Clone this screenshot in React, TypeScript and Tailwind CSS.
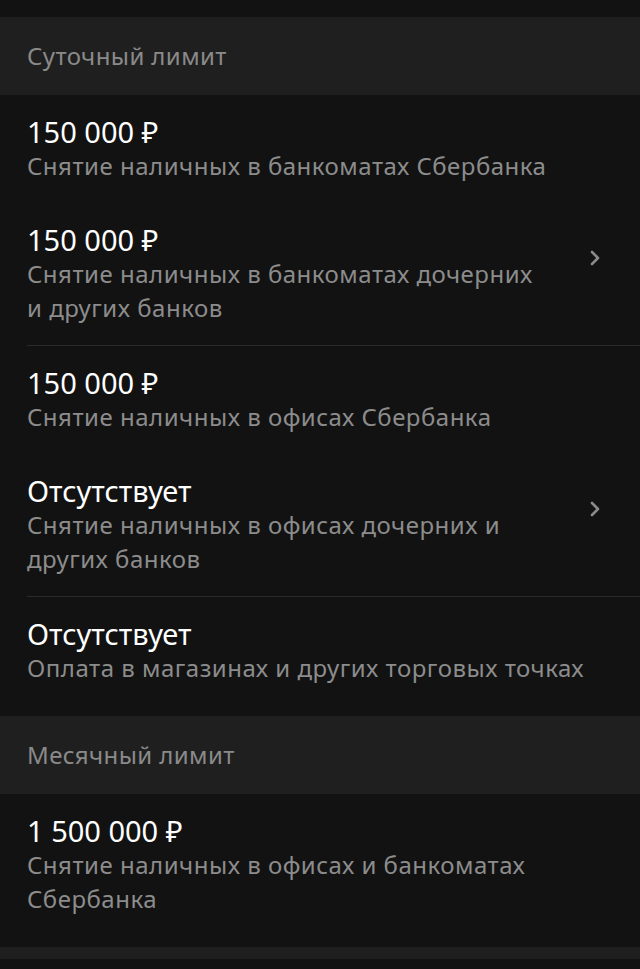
import React from 'react';

interface Limit {
  value: string;
  label: string[];
  arrow?: boolean;
  divider?: boolean;
}

const DAILY: Limit[] = [
  { value: '150 000 ₽', label: ['Снятие наличных в банкоматах Сбербанка'] },
  {
    value: '150 000 ₽',
    label: ['Снятие наличных в банкоматах дочерних', 'и других банков'],
    arrow: true,
    divider: true,
  },
  { value: '150 000 ₽', label: ['Снятие наличных в офисах Сбербанка'] },
  {
    value: 'Отсутствует',
    label: ['Снятие наличных в офисах дочерних и', 'других банков'],
    arrow: true,
    divider: true,
  },
  { value: 'Отсутствует', label: ['Оплата в магазинах и других торговых точках'] },
];

const MONTHLY: Limit[] = [
  { value: '1 500 000 ₽', label: ['Снятие наличных в офисах и банкоматах', 'Сбербанка'] },
];

function Chevron() {
  return (
    <svg width="14" height="18" viewBox="0 0 14 18" fill="none" className="shrink-0 mt-[26px]">
      <path d="M4 3l6 6-6 6" stroke="#8a8a8a" strokeWidth="2.6" strokeLinecap="round" strokeLinejoin="round" />
    </svg>
  );
}

function Row({ item }: { item: Limit }) {
  return (
    <div className="pl-[27px]">
      <div
        className={`flex items-start pr-[38px] pt-[20px] pb-[20px] ${
          item.divider ? 'border-b border-[#2a2a2a]' : ''
        }`}
      >
        <div className="flex-1">
          <div className="text-[29px] leading-[34px] text-white">{item.value}</div>
          {item.label.map((l) => (
            <div key={l} className="text-[24px] leading-[34px] tracking-[0.5px] text-[#8c8c8c]">
              {l}
            </div>
          ))}
        </div>
        {item.arrow && <Chevron />}
      </div>
    </div>
  );
}

function Section({ title, items }: { title: string; items: Limit[] }) {
  return (
    <div>
      <div className="h-[78px] bg-[#1f1f1f] pl-[27px] flex items-center text-[24px] tracking-[0.4px] text-[#8a8a8a]">
        {title}
      </div>
      <div className="pb-[11px]">
        {items.map((it, i) => (
          <Row key={i} item={it} />
        ))}
      </div>
    </div>
  );
}

export default function App() {
  return (
    <div className="min-h-[969px] bg-[#121212] pt-[17px]" style={{ fontFamily: '"Noto Sans", sans-serif' }}>
      <Section title="Суточный лимит" items={DAILY} />
      <Section title="Месячный лимит" items={MONTHLY} />
      <div className="h-[12px] bg-[#1f1f1f]" />
    </div>
  );
}
